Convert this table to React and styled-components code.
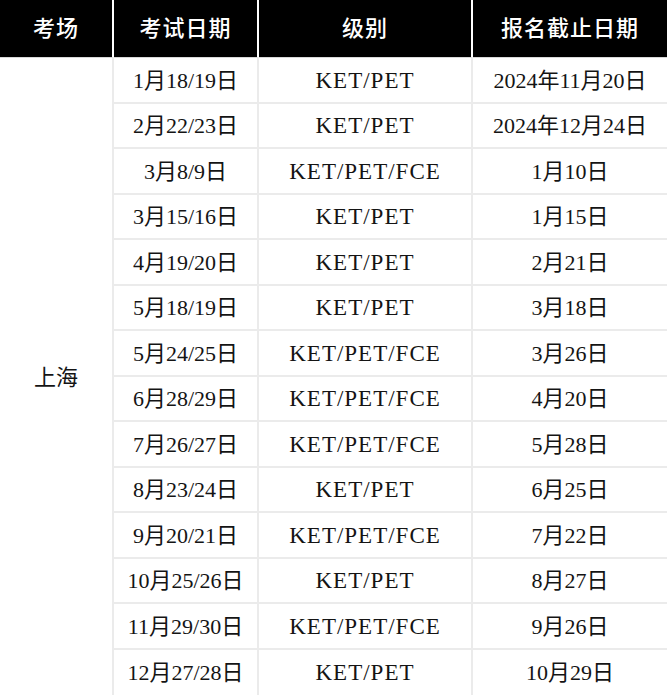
import React from "react";
import styled, { createGlobalStyle } from "styled-components";

const GlobalStyle = createGlobalStyle`
  html, body {
    margin: 0;
    padding: 0;
    background: #ffffff;
  }
  body {
    font-family: "Liberation Serif", "Noto Sans CJK SC", serif;
    color: #141414;
  }
`;

const Table = styled.table`
  width: 667px;
  table-layout: fixed;
  border-collapse: separate;
  border-spacing: 0;
`;

const HeadRow = styled.tr`
  height: 58px;
`;

const HeadCell = styled.th`
  padding: 0;
  background: #000000;
  color: #ffffff;
  font-size: 22px;
  font-weight: 500;
  line-height: 26px;
  letter-spacing: 1px;
  text-align: center;
  vertical-align: middle;
  border-right: ${(p) => (p.$last ? "none" : "2px solid #ffffff")};
  border-bottom: 1px solid #d8d8d8;
`;

const BodyRow = styled.tr`
  height: 45.5px;
`;

const Cell = styled.td`
  padding: 2px 0 0;
  text-align: center;
  vertical-align: middle;
  font-size: ${(p) => (p.$level ? "23px" : "22px")};
  line-height: 26px;
  letter-spacing: ${(p) => (p.$level ? "1px" : "0")};
  white-space: nowrap;
  border-right: ${(p) => (p.$last ? "none" : "2px solid #ebebeb")};
  border-bottom: ${(p) => (p.$lastRow ? "none" : "2px solid #ebebeb")};
`;

const PlaceCell = styled.td`
  padding: 2px 0 0;
  text-align: center;
  vertical-align: middle;
  font-size: 22px;
  line-height: 26px;
  border-right: 2px solid #ebebeb;
`;

const rows = [
  ["1月18/19日", "KET/PET", "2024年11月20日"],
  ["2月22/23日", "KET/PET", "2024年12月24日"],
  ["3月8/9日", "KET/PET/FCE", "1月10日"],
  ["3月15/16日", "KET/PET", "1月15日"],
  ["4月19/20日", "KET/PET", "2月21日"],
  ["5月18/19日", "KET/PET", "3月18日"],
  ["5月24/25日", "KET/PET/FCE", "3月26日"],
  ["6月28/29日", "KET/PET/FCE", "4月20日"],
  ["7月26/27日", "KET/PET/FCE", "5月28日"],
  ["8月23/24日", "KET/PET", "6月25日"],
  ["9月20/21日", "KET/PET/FCE", "7月22日"],
  ["10月25/26日", "KET/PET", "8月27日"],
  ["11月29/30日", "KET/PET/FCE", "9月26日"],
  ["12月27/28日", "KET/PET", "10月29日"],
];

export default function App() {
  return (
    <>
      <GlobalStyle />
      <Table>
        <colgroup>
          <col style={{ width: 114 }} />
          <col style={{ width: 145 }} />
          <col style={{ width: 214 }} />
          <col style={{ width: 194 }} />
        </colgroup>
        <thead>
          <HeadRow>
            <HeadCell>考场</HeadCell>
            <HeadCell>考试日期</HeadCell>
            <HeadCell>级别</HeadCell>
            <HeadCell $last>报名截止日期</HeadCell>
          </HeadRow>
        </thead>
        <tbody>
          {rows.map(([date, level, deadline], i) => {
            const lastRow = i === rows.length - 1;
            return (
              <BodyRow key={date}>
                {i === 0 && <PlaceCell rowSpan={rows.length}>上海</PlaceCell>}
                <Cell $lastRow={lastRow}>{date}</Cell>
                <Cell $level $lastRow={lastRow}>{level}</Cell>
                <Cell $last $lastRow={lastRow}>{deadline}</Cell>
              </BodyRow>
            );
          })}
        </tbody>
      </Table>
    </>
  );
}
